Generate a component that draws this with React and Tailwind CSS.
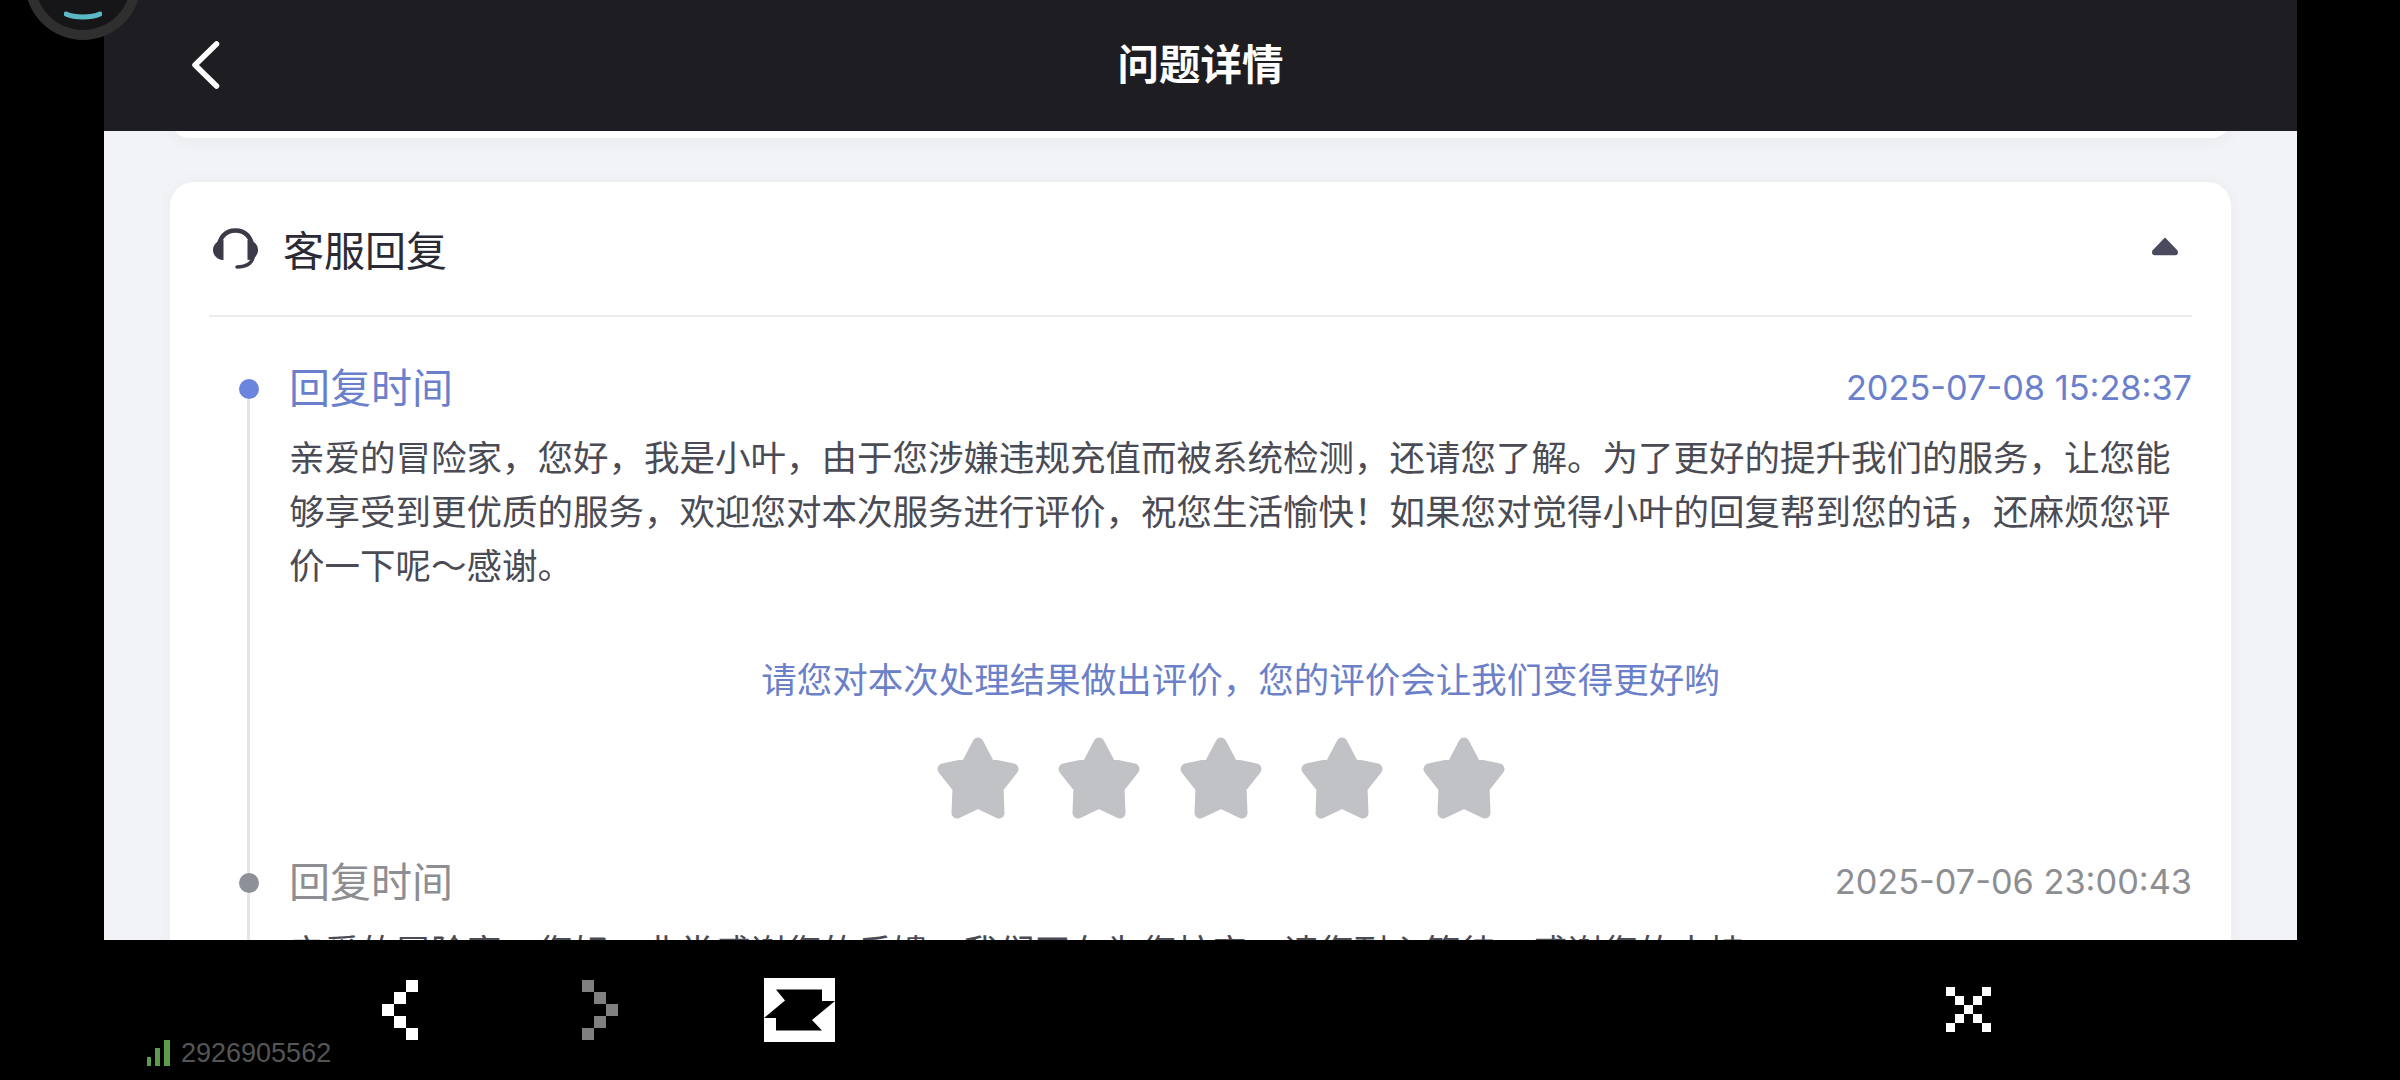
import React from 'react';

const CJK = "font-['Noto_Sans_CJK_SC','Noto_Sans',sans-serif]";

const body = '亲爱的冒险家，您好，我是小叶，由于您涉嫌违规充值而被系统检测，还请您了解。为了更好的提升我们的服务，让您能够享受到更优质的服务，欢迎您对本次服务进行评价，祝您生活愉快！如果您对觉得小叶的回复帮到您的话，还麻烦您评价一下呢～感谢。';

function Star() {
  return (
    <svg width="82" height="82" viewBox="0 0 82 82">
      <polygon
        points="41,6 52,27 76,32 61,51 62,76 41,66 20,76 21,51 6,32 30,27"
        fill="#c1c2c6"
        stroke="#c1c2c6"
        strokeWidth="11"
        strokeLinejoin="round"
      />
    </svg>
  );
}

function Headset() {
  return (
    <svg width="45" height="41" viewBox="0 0 45 41" fill="none">
      <path d="M6 20C6 9 13 2.500 22.500 2.500S39 9 39 20" stroke="#3a3a48" strokeWidth="4.500" />
      <path d="M10.500 12C4 12 0 17 0 22s4 10 10.500 10z" fill="#3a3a48" />
      <path d="M34.500 12C41 12 45 17 45 22s-4 10-10.500 10z" fill="#3a3a48" />
      <path d="M40 30c-2 6-8 9-16 9" stroke="#3a3a48" strokeWidth="3.500" strokeLinecap="round" />
    </svg>
  );
}

// pixel-art icons in the emulator bar
function Pixels({ cells, cols, rows, w, h, color }) {
  return (
    <svg width={cols * w} height={rows * h} viewBox={`0 0 ${cols * w} ${rows * h}`} shapeRendering="crispEdges">
      {cells.map(([x, y]) => (
        <rect key={`${x}-${y}`} x={x * w} y={y * h} width={w} height={h} fill={color} />
      ))}
    </svg>
  );
}

const leftCells = [[2, 0], [1, 1], [0, 2], [1, 3], [2, 4]];
const rightCells = [[0, 0], [1, 1], [2, 2], [1, 3], [0, 4]];
const crossCells = [[0, 0], [4, 0], [1, 1], [3, 1], [2, 2], [1, 3], [3, 3], [0, 4], [4, 4]];

function Swap() {
  return (
    <svg width="71" height="64" viewBox="0 0 71 64">
      <rect width="71" height="64" fill="#fff" />
      <path d="M12 11.500H58V23H71L48 42L58 52.500H12V40H0L21 22.500Z" fill="#000" />
    </svg>
  );
}

function TimelineItem({ active, last, date, children }) {
  return (
    <div className="flex">
      <div className="w-[80px] pl-[30px] flex flex-col items-start shrink-0">
        <div className={`w-[3px] h-[18px] ml-[8px] shrink-0 ${active ? '' : 'bg-[#e3e4e8]'}`} />
        <div className={`w-[20px] h-[20px] rounded-full shrink-0 ${active ? 'bg-[#6b84de]' : 'bg-[#8e9099]'}`} />
        <div className="w-[3px] flex-1 ml-[8px] bg-[#e3e4e8]" />
      </div>
      <div className={`flex-1 min-w-0 ${last ? '' : 'pb-[36px]'}`}>
        <div className={`flex justify-between items-center h-[55px] ${active ? 'text-[#6b80cc]' : 'text-[#8d8e92]'}`}>
          <span className="text-[41px] mb-[6px]">回复时间</span>
          <span className="text-[34.300px] mb-[2px] font-['Inter',sans-serif]">{date}</span>
        </div>
        {children}
      </div>
    </div>
  );
}

export default function App() {
  return (
    <div className={`relative w-[2400px] h-[1080px] bg-black overflow-hidden flex flex-col ${CJK}`}>
      {/* floating ball */}
      <div className="absolute left-[25px] top-[-76px] w-[116px] h-[116px] rounded-full border-[10px] border-[#3a3a3a]/70 bg-[#161618] z-20">
        <svg className="absolute left-[29px] top-[76px]" width="38" height="12" viewBox="0 0 38 12" fill="none">
          <path d="M2 4C11 8 27 8 36 4" stroke="#5cb8c4" strokeWidth="5" strokeLinecap="round" />
        </svg>
      </div>

      <div className="ml-[104px] w-[2193px] h-[940px] shrink-0 overflow-hidden bg-[#f2f3f7]">
        {/* header */}
        <div className="relative z-10 h-[131px] bg-[#1e1e22] flex items-center justify-center">
          <svg className="absolute left-[84px] top-[39px]" width="34" height="52" viewBox="0 0 34 52" fill="none">
            <path d="M28.500 5L7 26L28.500 47" stroke="#fff" strokeWidth="5.500" strokeLinecap="round" strokeLinejoin="round" />
          </svg>
          <span className="text-[41.500px] font-bold text-white mb-[6px]">问题详情</span>
        </div>

        {/* previous card peeks out */}
        <div className="mx-[66px] h-[40px] mt-[-33px] bg-white rounded-[24px] shadow-[0_4px_20px_rgba(0,0,0,0.04)]" />

        <div className="mx-[66px] mt-[44px] h-[800px] bg-white rounded-[24px] px-[39px] shadow-[0_0_20px_rgba(0,0,0,0.03)]">
          <div className="h-[135px] flex items-center border-b-2 border-[#ececef]">
            <div className="ml-[4px]"><Headset /></div>
            <span className="ml-[25px] text-[41px] text-[#2b2b36]">客服回复</span>
            <svg className="ml-auto mr-[13px] mb-[4px]" width="28" height="20" viewBox="0 0 28 20">
              <path d="M14 1.500L26 14Q27 17.500 24 17.500H4Q1 17.500 2 14Z" fill="#4a4a5e" stroke="#4a4a5e" strokeWidth="1.500" strokeLinejoin="round" />
            </svg>
          </div>

          <div className="pt-[44px]">
            <TimelineItem active date="2025-07-08 15:28:37">
              <p className="mt-[13px] text-[35.500px] leading-[54px] text-[#4a4b54]">{body}</p>
              <p className="mt-[60px] text-center text-[35.500px] leading-[54px] text-[#6b80c9]">
                请您对本次处理结果做出评价，您的评价会让我们变得更好哟
              </p>
              <div className="mt-[32px] pr-[40px] flex justify-center gap-[39.500px]">
                <Star /><Star /><Star /><Star /><Star />
              </div>
            </TimelineItem>
            <TimelineItem last date="2025-07-06 23:00:43">
              <p className="mt-[13px] text-[35.500px] leading-[54px] text-[#4a4b54]">
                亲爱的冒险家，您好，非常感谢您的反馈，我们正在为您核实，请您耐心等待，感谢您的支持。
              </p>
            </TimelineItem>
          </div>
        </div>
      </div>

      {/* emulator bar */}
      <div className="flex-1 flex items-start pt-[40px]">
        <div className="ml-[147px] mt-[60px] w-[235px] flex items-end gap-[11px] h-[26px]">
          <div className="flex items-end gap-[4px]">
            <div className="w-[4px] h-[9px] bg-[#5c9c4c]" />
            <div className="w-[5px] h-[18px] bg-[#5c9c4c]" />
            <div className="w-[6px] h-[26px] bg-[#5c9c4c]" />
          </div>
          <span className="text-[27px] leading-[26px] text-[#555555] font-['Liberation_Sans',sans-serif]">2926905562</span>
        </div>
        <Pixels cells={leftCells} cols={3} rows={5} w={12} h={12} color="#ffffff" />
        <div className="ml-[164px]">
          <Pixels cells={rightCells} cols={3} rows={5} w={12} h={12} color="#808080" />
        </div>
        <div className="ml-[146px] mt-[-2px]"><Swap /></div>
        <div className="ml-[1111px] mt-[7px]">
          <Pixels cells={crossCells} cols={5} rows={5} w={9} h={9} color="#ffffff" />
        </div>
      </div>
    </div>
  );
}
